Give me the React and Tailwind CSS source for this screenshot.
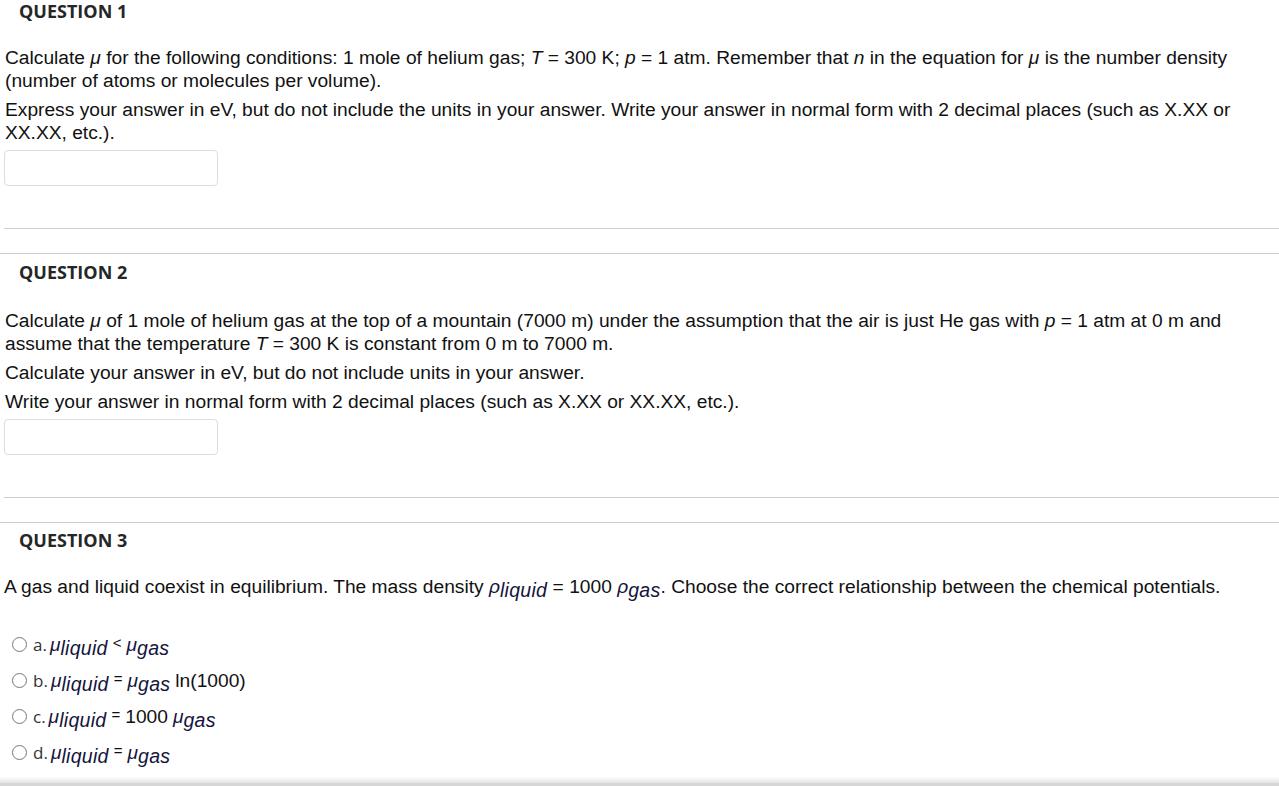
const BODY = "font-['Liberation_Sans',Arial,sans-serif] text-[19.2px] leading-[23px] text-[#111]"
const HEAD = "font-['Open_Sans',sans-serif] font-bold text-[18px] leading-[22px] text-[#262626] pl-[19px]"

function Heading({ children, className = '' }) {
  return <h3 className={`${HEAD} ${className}`}>{children}</h3>
}

function AnswerBox({ className = '' }) {
  return <div className={`ml-[4px] w-[214px] h-[36px] rounded border border-[#ddd] bg-white ${className}`} />
}

function Dividers() {
  return (
    <div>
      <div className="ml-[4px] h-px bg-[#cfcfcf]" />
      <div className="mt-[24px] h-px bg-[#cfcfcf]" />
    </div>
  )
}

// math-ish symbol with an italic subscript
function Sym({ base, sub }) {
  return (
    <span className="font-['Liberation_Sans',Arial,sans-serif] italic text-[#14143c]">
      {base}
      <span className="text-[19.5px] tracking-[0.3px] relative top-[4px]">{sub}</span>
    </span>
  )
}

const Op = ({ children }) => <span className="text-[15px] mx-[5px] relative -top-[3px]">{children}</span>

const OPTIONS = [
  { key: 'a.', body: <><Sym base="μ" sub="liquid" /><Op>&lt;</Op><Sym base="μ" sub="gas" /></> },
  { key: 'b.', body: <><Sym base="μ" sub="liquid" /><Op>=</Op><Sym base="μ" sub="gas" /><span className="ml-[5px]">ln(1000)</span></> },
  { key: 'c.', body: <><Sym base="μ" sub="liquid" /><Op>=</Op><span className="mr-[5px]">1000</span><Sym base="μ" sub="gas" /></> },
  { key: 'd.', body: <><Sym base="μ" sub="liquid" /><Op>=</Op><Sym base="μ" sub="gas" /></> },
]

export default function App() {
  return (
    <div className="w-[1279px] h-[786px] bg-white overflow-hidden relative">
      {/* Question 1 */}
      <Heading>QUESTION 1</Heading>
      <div className={`${BODY} pl-[5px] pr-[40px] mt-[24px]`}>
        <p>
          Calculate <i>μ</i> for the following conditions: 1 mole of helium gas; <i>T</i> = 300 K; <i>p</i> = 1 atm. Remember that <i>n</i> in the equation for <i>μ</i> is the number density (number of atoms or molecules per volume).
        </p>
        <p className="mt-[6px]">
          Express your answer in eV, but do not include the units in your answer. Write your answer in normal form with 2 decimal places (such as X.XX or XX.XX, etc.).
        </p>
      </div>
      <AnswerBox className="mt-[6px]" />
      <div className="mt-[42px]">
        <Dividers />
      </div>

      {/* Question 2 */}
      <Heading className="mt-[7px]">QUESTION 2</Heading>
      <div className={`${BODY} pl-[5px] pr-[40px] mt-[26px]`}>
        <p>
          Calculate <i>μ</i> of 1 mole of helium gas at the top of a mountain (7000 m) under the assumption that the air is just He gas with <i>p</i> = 1 atm at 0 m and assume that the temperature <i>T</i> = 300 K is constant from 0 m to 7000 m.
        </p>
        <p className="mt-[6px]">Calculate your answer in eV, but do not include units in your answer.</p>
        <p className="mt-[6px]">Write your answer in normal form with 2 decimal places (such as X.XX or XX.XX, etc.).</p>
      </div>
      <AnswerBox className="mt-[6px]" />
      <div className="mt-[42px]">
        <Dividers />
      </div>

      {/* Question 3 */}
      <Heading className="mt-[6px]">QUESTION 3</Heading>
      <div className={`${BODY} pl-[4px] mt-[24px]`}>
        <p>
          A gas and liquid coexist in equilibrium. The mass density <Sym base="ρ" sub="liquid" /> = 1000 <Sym base="ρ" sub="gas" />. Choose the correct relationship between the chemical potentials.
        </p>
      </div>
      <ul className="mt-[35px] pl-[12px] flex flex-col gap-[13px]">
        {OPTIONS.map((o) => (
          <li key={o.key} className="flex items-center h-[23px]">
            <span className="w-[15px] h-[15px] rounded-full border border-[#777] bg-white shrink-0" />
            <span className="ml-[6px] font-['Open_Sans',sans-serif] text-[17px] text-[#333] mr-[3px]">{o.key}</span>
            <span className={`${BODY} flex items-baseline`}>{o.body}</span>
          </li>
        ))}
      </ul>

      {/* bottom edge */}
      <div className="absolute left-0 right-0 bottom-0 h-[9px] bg-gradient-to-b from-white to-[#e2e2e2] border-b-[3px] border-[#d6d6d6]" />
    </div>
  )
}
